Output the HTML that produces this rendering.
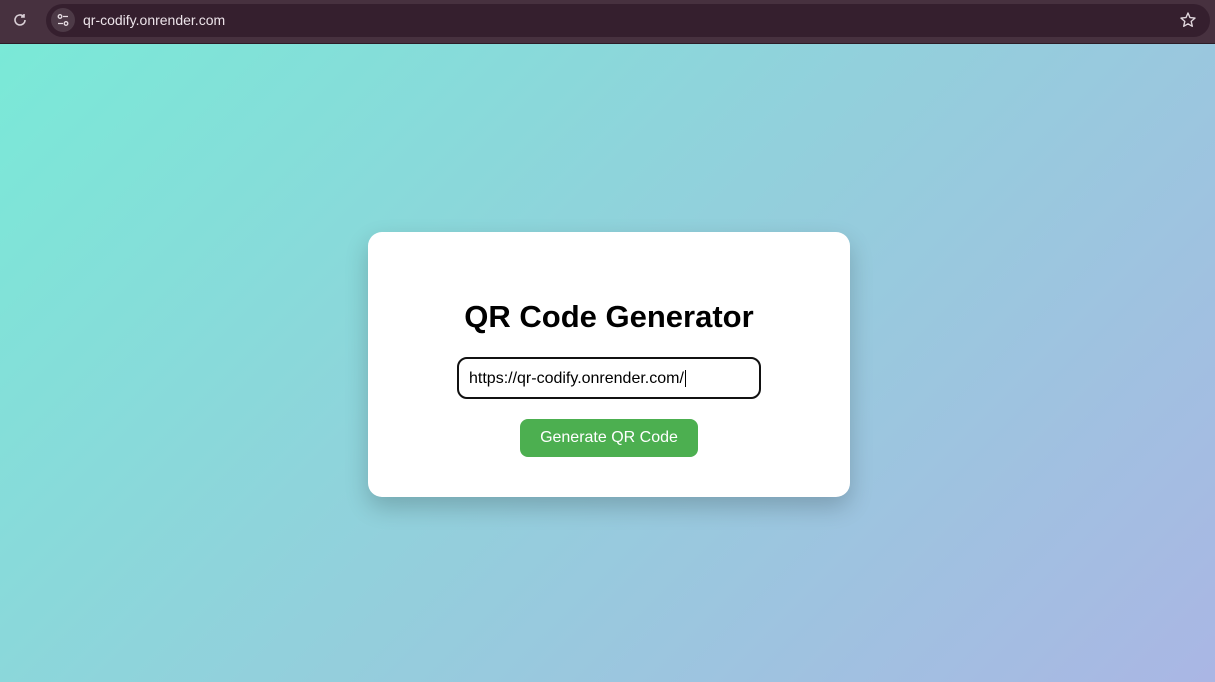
<!DOCTYPE html>
<html><head><style>
html,body{margin:0;padding:0;width:1215px;height:682px;overflow:hidden;font-family:"Liberation Sans",sans-serif;}
.bar{position:absolute;left:0;top:0;width:1215px;height:43px;background:#47313f;border-bottom:1px solid #2b1d27;}
.omni{position:absolute;left:46px;top:4px;width:1164px;height:33px;border-radius:17px;background:#351f2e;}
.tune{position:absolute;left:51px;top:8px;width:24px;height:24px;border-radius:12px;background:#4d3a47;}
.url{position:absolute;left:83px;top:12px;font-size:14px;color:#ede4ea;}
.page{position:absolute;left:0;top:44px;width:1215px;height:638px;background:linear-gradient(135deg,#7ae9d7 0%,#93cfdc 50%,#aab6e4 100%);}
.card{position:absolute;left:368px;top:232px;width:482px;height:265px;background:#fff;border-radius:14px;box-shadow:0 10px 24px rgba(0,0,0,0.2);}
h1{position:absolute;left:0;width:482px;top:67px;margin:0;text-align:center;font-family:"Liberation Sans",sans-serif;font-size:31px;font-weight:bold;color:#000;}
.inp{position:absolute;left:89px;top:125px;width:300px;height:38px;border:2px solid #111;border-radius:10px;box-sizing:content-box;}
.inp span{position:absolute;left:10px;top:11px;font-size:16px;color:#000;}
.btn{position:absolute;left:152px;top:187px;width:178px;height:38px;background:#4caf50;border-radius:8px;color:#fff;font-size:16px;text-align:center;line-height:38px;}
</style></head><body>
<div class="bar">
<svg style="position:absolute;left:12px;top:12px" width="16" height="16" viewBox="0 0 16 16"><path d="M13 8a5 5 0 1 1-1.5-3.6M12 2v3h-3" fill="none" stroke="#d9cfd6" stroke-width="1.6"/></svg>
<div class="omni"></div>
<div class="tune"><svg width="24" height="24" viewBox="0 0 24 24"><circle cx="9" cy="8.5" r="1.8" fill="none" stroke="#e6dde3" stroke-width="1.3"/><path d="M12 8.5h5M7 15.5h5" stroke="#e6dde3" stroke-width="1.3"/><circle cx="15" cy="15.5" r="1.8" fill="none" stroke="#e6dde3" stroke-width="1.3"/></svg></div>
<div class="url">qr-codify.onrender.com</div>
<svg style="position:absolute;left:1179px;top:11px" width="18" height="18" viewBox="0 0 18 18"><path d="M9 2l2 4.6 5 .5-3.8 3.3 1.1 4.9L9 12.8 4.7 15.3l1.1-4.9L2 7.1l5-.5z" fill="none" stroke="#e0d6dc" stroke-width="1.4" stroke-linejoin="round"/></svg>
</div>
<div class="page"></div>
<div class="card">
<h1>QR Code Generator</h1>
<div class="inp"><span>https://qr-codify.onrender.com/<span style="position:static;border-left:1px solid #000;margin-left:1px"></span></span></div>
<div class="btn">Generate QR Code</div>
</div>
</body></html>
